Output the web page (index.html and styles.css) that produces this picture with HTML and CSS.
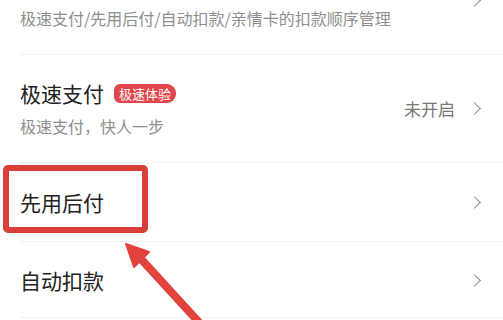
FILE: index.html
```html
<!DOCTYPE html>
<html lang="zh-CN">
<head>
    <meta charset="UTF-8">
    <meta name="viewport" content="width=device-width, initial-scale=1.0">
    <title>扣款设置</title>
    <link rel="stylesheet" href="styles.css">
</head>
<body>
    <div class="page">
        <ul class="menu-list">
            <!-- Deduction order (title scrolled out of view) -->
            <li class="menu-item">
                <div class="item-text">
                    <div class="item-title"></div>
                    <div class="item-desc">极速支付/先用后付/自动扣款/亲情卡的扣款顺序管理</div>
                </div>
                <span class="chevron"></span>
            </li>

            <!-- Fast pay -->
            <li class="menu-item">
                <div class="item-text">
                    <div class="item-title">极速支付 <span class="badge">极速体验</span></div>
                    <div class="item-desc">极速支付，快人一步</div>
                </div>
                <span class="item-status">未开启</span>
                <span class="chevron"></span>
            </li>

            <!-- Pay later -->
            <li class="menu-item single">
                <div class="item-text">
                    <div class="item-title">先用后付</div>
                </div>
                <span class="chevron"></span>
                <div class="highlight-box"></div>
            </li>

            <!-- Auto deduction -->
            <li class="menu-item single last">
                <div class="item-text">
                    <div class="item-title">自动扣款</div>
                </div>
                <span class="chevron"></span>
            </li>
        </ul>

        <!-- Annotation arrow -->
        <svg class="pointer-arrow" width="503" height="320" viewBox="0 0 503 320">
            <line x1="141" y1="259" x2="206" y2="330" stroke="#e2433c" stroke-width="8"/>
            <polygon points="126,244 149,252 134,267" fill="#e2433c" stroke="#e2433c" stroke-width="2" stroke-linejoin="round"/>
        </svg>
    </div>
</body>
</html>
```

FILE: styles.css
```css
body {
    margin: 0;
    padding: 0;
    background-color: white;
    font-family: "Noto Sans CJK SC", "Noto Sans", sans-serif;
    color: #222;
    overflow: hidden;
}

.page {
    position: relative;
    width: 503px;
    height: 320px;
    overflow: hidden;
}

.menu-list {
    list-style: none;
    margin: -53px 0 0 20px;
    padding: 0;
}

.menu-item {
    position: relative;
    display: flex;
    align-items: center;
    padding: 24px 22px 25px 0;
    border-bottom: 1px solid #efefef;
}

.menu-item.single {
    padding: 25px 22px 25px 0;
}

.menu-item.last {
    padding: 24px 22px 23px 0;
}

.item-text {
    flex: 1;
}

.item-title {
    display: flex;
    align-items: center;
    min-height: 28px;
    font-size: 21px;
    line-height: 28px;
    color: #222;
}

.badge {
    margin-left: 10px;
    padding: 0 5px;
    height: 19px;
    line-height: 19px;
    font-size: 13px;
    color: white;
    background-color: #e0464b;
    border-radius: 6px 9px 9px 6px;
}

.item-desc {
    margin-top: 8px;
    font-size: 16px;
    line-height: 22px;
    color: #8e8e8e;
}

.item-status {
    margin-right: 15px;
    font-size: 17px;
    color: #777;
}

.chevron {
    width: 8px;
    height: 8px;
    margin-right: 2px;
    border-top: 1.5px solid #888;
    border-right: 1.5px solid #888;
    transform: rotate(45deg);
}

.highlight-box {
    position: absolute;
    left: -17px;
    top: 2px;
    width: 133px;
    height: 56px;
    border: 6px solid #da3f39;
    border-radius: 5px;
}

.pointer-arrow {
    position: absolute;
    left: 0;
    top: 0;
}
```
